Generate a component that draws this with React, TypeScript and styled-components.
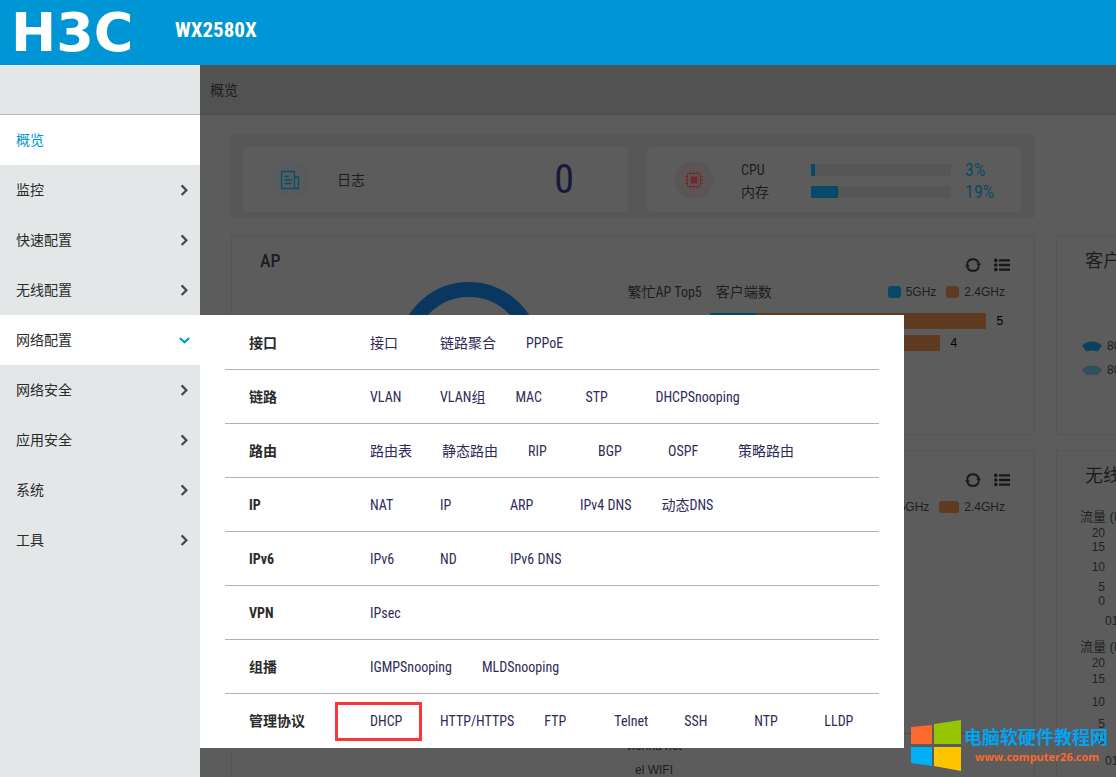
import React from 'react';
import styled, { createGlobalStyle } from 'styled-components';

const narrow = `"Roboto Condensed", "Liberation Sans Narrow", "Noto Sans CJK SC", sans-serif`;
const arial = `"Liberation Sans", "Noto Sans CJK SC", sans-serif`;

const GlobalStyle = createGlobalStyle`
  * { box-sizing: border-box; }
  body { margin: 0; font-family: ${narrow}; font-size: 14px; line-height: 20px; color: #1c1c22; background: #5c5c5c; }
  button { font: inherit; color: inherit; border: 0; background: none; padding: 0; cursor: pointer; }
  a { color: inherit; text-decoration: none; }
  h1, h2, h3, p, ul { margin: 0; padding: 0; font: inherit; list-style: none; }
  svg { display: block; }
`;

const Shell = styled.div`
  position: relative;
  display: flex;
  flex-direction: column;
  height: 100vh;
  overflow: hidden;
`;

const Header = styled.header`
  flex: none;
  display: flex;
  gap: 20px;
  height: 65px;
  padding: 0 12px 0 11px;
  background: #0096d6;
  color: #fff;
`;

const Logo = styled.a`
  width: 144px;
  font: bold 54px/66px "DejaVu Sans", sans-serif;
`;

const Model = styled.h1`
  font-size: 21px;
  font-weight: bold;
  line-height: 60px;
`;

const Body = styled.div`
  flex: 1;
  display: flex;
  min-height: 0;
  position: relative;
`;

const Sidebar = styled.nav`
  flex: none;
  width: 200px;
  background: #e3e7e8;
`;

const SidebarTop = styled.div`
  height: 50px;
  border-bottom: 1px solid #b4b8b9;
`;

const NavItem = styled.button<{ $open?: boolean; $current?: boolean }>`
  display: flex;
  align-items: center;
  justify-content: space-between;
  width: 100%;
  height: 50px;
  padding: 0 10px 0 16px;
  background: ${(p) => (p.$open || p.$current ? '#fff' : 'transparent')};
  color: ${(p) => (p.$current ? '#0096d6' : '#2b2b2b')};
`;

const Main = styled.main`
  flex: 1;
  min-width: 0;
  overflow: hidden;
`;

const Crumb = styled.div`
  height: 50px;
  padding: 0 10px;
  line-height: 50px;
  background: #525252;
  border-bottom: 1px solid #4e4e4e;
`;

const Board = styled.div`
  display: grid;
  grid-template-columns: minmax(804px, 2fr) minmax(380px, 1fr);
  column-gap: 21px;
  padding: 20px 0 0 31px;
`;

const Overview = styled.section`
  display: grid;
  grid-template-columns: 385fr 374fr;
  gap: 19px;
  grid-column: 1;
  height: 83px;
  margin-bottom: 17px;
  padding: 12px 14px 6px 12px;
  background: #575757;
`;

const Tile = styled.div`
  display: flex;
  align-items: center;
  padding: 0 28px;
  border-radius: 4px;
  background: #5c5c5c;
`;

const Round = styled.span<{ $tint: string }>`
  display: flex;
  align-items: center;
  justify-content: center;
  flex: none;
  width: 38px;
  height: 38px;
  margin-right: 28px;
  border-radius: 50%;
  background: ${(p) => p.$tint};
`;

const Count = styled.strong`
  margin-left: auto;
  margin-right: 26px;
  font-size: 40px;
  font-weight: normal;
  line-height: 60px;
  color: #1a1836;
`;

const Meters = styled.div`
  flex: 1;
  padding-top: 2px;
`;

const Meter = styled.div`
  display: grid;
  grid-template-columns: 70px 1fr 28px;
  align-items: center;
  height: 22px;
`;

const Track = styled.span`
  height: 12px;
  margin-right: 14px;
  background: #565656;
`;

const Fill = styled.span`
  display: block;
  height: 100%;
  background: #064a66;
`;

const Percent = styled.span`
  font-size: 18px;
  color: #0a4a66;
`;

const Card = styled.section<{ $tall?: boolean; $first?: boolean }>`
  ${(p) => p.$first && 'grid-column: 1;'}
  height: ${(p) => (p.$tall ? '420px' : '200px')};
  margin-bottom: 15px;
  padding: 0 24px 0 28px;
  border: 1px solid #565656;
  overflow: hidden;
`;

const CardHead = styled.div`
  display: flex;
  justify-content: space-between;
  height: 46px;
  padding-top: 13px;
`;

const CardTitle = styled.h2<{ $strong?: boolean }>`
  font-size: 18px;
  font-weight: ${(p) => (p.$strong ? 500 : 400)};
  line-height: 24px;
`;

const Tools = styled.div`
  display: flex;
  align-items: center;
  gap: 13px;
  height: 32px;
`;

const ApBody = styled.div`
  display: grid;
  grid-template-columns: 368fr 383fr;
`;

const DonutBox = styled.div`
  display: flex;
  justify-content: center;
  padding-left: 50px;
`;

const Legend = styled.div`
  display: flex;
  align-items: center;
  gap: 10px;
  margin-left: auto;
  padding-right: 5px;
  font: 12px/18px ${arial};
`;

const Key = styled.span<{ $tone: string; $wide?: boolean }>`
  display: flex;
  align-items: center;
  gap: 5px;
  &::before {
    content: '';
    width: ${(p) => (p.$wide ? '20px' : '13px')};
    height: 12px;
    border-radius: 3px;
    background: ${(p) => p.$tone};
  }
`;

const ChartHead = styled.div`
  display: flex;
  gap: 14px;
  height: 20px;
`;

const Bars = styled.div`
  display: grid;
  gap: 6px;
  padding: 11px 0 0 82px;
`;

const BarRow = styled.div`
  display: flex;
  align-items: center;
  height: 16px;
  font: 12px/16px ${arial};
  color: #000;
`;

const Segment = styled.span<{ $tone: string }>`
  height: 16px;
  background: ${(p) => p.$tone};
`;

const BarValue = styled.span`
  margin-left: 11px;
`;

const RadioList = styled.ul`
  padding-top: 52px;
  font: 12px/24px ${arial};
  li { display: flex; align-items: center; gap: 5px; margin-left: -3px; }
`;

const SsidAxis = styled.div`
  display: flex;
  justify-content: center;
  margin-top: 216px;
  padding-left: 38px;
  border-top: 1px solid #4c4c4c;
  font: 12px/24px ${arial};
  text-align: center;
  white-space: nowrap;
`;

const TrafficChart = styled.svg`
  margin: 19px 0 0 -5px;
  overflow: visible;
  font: 12px ${arial};
  fill: #222226;
`;

/* Fly-out menu over the dashboard */
const Flyout = styled.div`
  position: absolute;
  left: 200px;
  top: 250px;
  width: 704px;
  padding: 1px 25px 0;
  background: #fff;
`;

const FlyRow = styled.div`
  display: flex;
  align-items: center;
  height: 54px;
  padding-left: 24px;
  border-bottom: 1px solid #b2b2b2;
  &:last-child { border-bottom: 0; }
`;

const FlyTitle = styled.h3`
  width: 121px;
  font-weight: bold;
  color: #2b2b2b;
`;

const FlyLinks = styled.div`
  display: flex;
  gap: 30px;
  color: #2f2a5a;
  white-space: nowrap;
`;

const FlyLink = styled.a<{ $marked?: boolean }>`
  position: relative;
  min-width: 40px;
  ${(p) =>
    p.$marked &&
    `&::after {
      content: '';
      position: absolute;
      inset: -9px -12px -10px -35px;
      border: 3px solid #fb3638;
    }`}
`;

const Watermark = styled.aside`
  position: absolute;
  right: 8px;
  bottom: 5px;
  display: flex;
  gap: 3px;
  white-space: nowrap;
`;

const MarkName = styled.p`
  padding-top: 4px;
  font: bold 18px/24px "Noto Sans CJK SC", sans-serif;
  color: #00a4f4;
`;

const MarkUrl = styled.a`
  display: block;
  padding: 1px 0 0 11px;
  font: bold 11px/16px "Open Sans", sans-serif;
  color: #fb6a2c;
`;

const menu = ['监控', '快速配置', '无线配置', '网络配置', '网络安全', '应用安全', '系统', '工具'];

const groups: [string, string[]][] = [
  ['接口', ['接口', '链路聚合', 'PPPoE']],
  ['链路', ['VLAN', 'VLAN组', 'MAC', 'STP', 'DHCPSnooping']],
  ['路由', ['路由表', '静态路由', 'RIP', 'BGP', 'OSPF', '策略路由']],
  ['IP', ['NAT', 'IP', 'ARP', 'IPv4 DNS', '动态DNS']],
  ['IPv6', ['IPv6', 'ND', 'IPv6 DNS']],
  ['VPN', ['IPsec']],
  ['组播', ['IGMPSnooping', 'MLDSnooping']],
  ['管理协议', ['DHCP', 'HTTP/HTTPS', 'FTP', 'Telnet', 'SSH', 'NTP', 'LLDP']],
];

const blue = '#064a66';
const orange = '#5f3b22';

const Chevron = ({ down }: { down?: boolean }) => (
  <svg width="11" height="12" viewBox="0 0 11 12" fill="none" strokeWidth="2.2" stroke={down ? '#0096d6' : '#44464f'}>
    <path d={down ? 'M0.8 4l4.7 4.2L10.2 4' : 'M2.6 1.4l4.8 4.8L2.6 11'} />
  </svg>
);

const RefreshIcon = () => (
  <svg width="16" height="16" viewBox="0 0 16 16">
    <path d="M2.2 6.6A6 6 0 0 1 13.8 6.6M13.8 9.4A6 6 0 0 1 2.2 9.4" fill="none" stroke="#17171c" strokeWidth="2" />
    <path d="M11.2 6.6h4.8l-2.3 3.4zM0 9.4h4.8L2.3 6z" fill="#17171c" />
  </svg>
);

const ListIcon = () => (
  <svg width="16" height="16" viewBox="0 0 16 16" fill="#17171c">
    <circle cx="1.8" cy="3.4" r="1.8" />
    <circle cx="1.8" cy="8" r="1.8" />
    <circle cx="1.8" cy="12.6" r="1.8" />
    <path d="M5 2.2h11v2.4H5zM5 6.8h11v2.4H5zM5 11.4h11v2.4H5z" />
  </svg>
);

const CardTools = () => (
  <Tools>
    <button type="button" aria-label="刷新"><RefreshIcon /></button>
    <button type="button" aria-label="列表"><ListIcon /></button>
  </Tools>
);

const LogIcon = () => (
  <svg width="20" height="20" viewBox="0 0 20 20" fill="none" stroke="#07506a" strokeWidth="1.3">
    <path d="M1.5 1.5h13v17h-13zM14.5 7h4v11.5h-4M4.5 6.5h4M4.5 10h7M4.5 13.5h7" />
  </svg>
);

const ChipIcon = () => (
  <svg width="20" height="20" viewBox="0 0 20 20" fill="none" stroke="#702a2e" strokeWidth="1">
    <rect x="3.5" y="3.5" width="13" height="13" rx="1" />
    <rect x="7" y="7" width="6" height="6" fill="#702a2e" />
    <path d="M6.5 1v2.5M10 1v2.5M13.5 1v2.5M6.5 16.5V19M10 16.5V19M13.5 16.5V19M1 6.5h2.5M1 10h2.5M1 13.5h2.5M16.5 6.5H19M16.5 10H19M16.5 13.5H19" />
  </svg>
);

const FanIcon = ({ tone }: { tone: string }) => (
  <svg width="20" height="11" viewBox="0 0 20 11" fill={tone}>
    <path d="M0 5Q3 0.5 10 0.5T20 5L15.5 10.4Q13 9.4 10 9.4T4.5 10.4Z" />
  </svg>
);

const Traffic = ({ top, ticks, end }: { top: number; ticks: [number, string][]; end: number }) => (
  <g>
    <text x="0" y={top} fontSize="13">流量 (Mbps)</text>
    {ticks.map(([y, label]) => (
      <text key={label} x="25" y={y} textAnchor="end">{label}</text>
    ))}
    <text x="25" y={end}>01:00</text>
  </g>
);

export default function App() {
  return (
    <Shell>
      <GlobalStyle />
      <Header>
        <Logo href="#">H3C</Logo>
        <Model>WX2580X</Model>
      </Header>
      <Body>
        <Sidebar>
          <SidebarTop />
          <NavItem type="button" $current>概览</NavItem>
          {menu.map((name) => (
            <NavItem key={name} type="button" $open={name === '网络配置'}>
              {name}
              <Chevron down={name === '网络配置'} />
            </NavItem>
          ))}
        </Sidebar>
        <Main>
          <Crumb>概览</Crumb>
          <Board>
            <Overview>
              <Tile>
                <Round $tint="#575b5e"><LogIcon /></Round>
                <span>日志</span>
                <Count>0</Count>
              </Tile>
              <Tile>
                <Round $tint="#5c5555"><ChipIcon /></Round>
                <Meters>
                  {[['CPU', 3], ['内存', 19]].map(([name, value]) => (
                    <Meter key={name}>
                      <span>{name}</span>
                      <Track><Fill style={{ width: `${value}%` }} /></Track>
                      <Percent>{value}%</Percent>
                    </Meter>
                  ))}
                </Meters>
              </Tile>
            </Overview>
            <Card $first>
              <CardHead>
                <CardTitle $strong>AP</CardTitle>
                <CardTools />
              </CardHead>
              <ApBody>
                <DonutBox>
                  <svg width="142" height="142" viewBox="0 0 142 142">
                    <circle cx="71" cy="71" r="63.5" fill="none" stroke="#0a3760" strokeWidth="15" />
                  </svg>
                </DonutBox>
                <div>
                  <ChartHead>
                    <span>繁忙AP Top5</span>
                    <span>客户端数</span>
                    <Legend>
                      <Key $tone={blue}>5GHz</Key>
                      <Key $tone={orange}>2.4GHz</Key>
                    </Legend>
                  </ChartHead>
                  <Bars>
                    {[[1, 5], [1, 4]].map(([five, two]) => (
                      <BarRow key={two}>
                        <Segment $tone={blue} style={{ width: five * 46 }} />
                        <Segment $tone={orange} style={{ width: two * 46 }} />
                        <BarValue>{two}</BarValue>
                      </BarRow>
                    ))}
                  </Bars>
                </div>
              </ApBody>
            </Card>
            <Card>
              <CardHead><CardTitle>客户端</CardTitle></CardHead>
              <RadioList>
                <li><FanIcon tone="#0a425c" />802.11ac</li>
                <li><FanIcon tone="#31505c" />802.11n</li>
              </RadioList>
            </Card>
            <Card $tall>
              <CardHead>
                <span />
                <CardTools />
              </CardHead>
              <ChartHead>
                <Legend>
                  <Key $wide $tone={blue}>5GHz</Key>
                  <Key $wide $tone={orange}>2.4GHz</Key>
                </Legend>
              </ChartHead>
              <SsidAxis><div>vienna hot<br />el WIFI</div></SsidAxis>
            </Card>
            <Card $tall>
              <CardHead><CardTitle>无线流量</CardTitle></CardHead>
              <TrafficChart width="300" height="280">
                <Traffic top={5} ticks={[[21, '20'], [35, '15'], [55, '10'], [75, '5'], [89, '0']]} end={109} />
                <Traffic top={135} ticks={[[151, '20'], [167, '15'], [190, '10'], [212, '5'], [228, '0']]} end={249} />
              </TrafficChart>
            </Card>
          </Board>
        </Main>
        <Flyout>
          {groups.map(([title, links]) => (
            <FlyRow key={title}>
              <FlyTitle>{title}</FlyTitle>
              <FlyLinks>
                {links.map((name) => (
                  <FlyLink key={name} href="#" $marked={name === 'DHCP'}>{name}</FlyLink>
                ))}
              </FlyLinks>
            </FlyRow>
          ))}
        </Flyout>
      </Body>
      <Watermark>
        <svg width="50" height="52" viewBox="0 0 50 52">
          <polygon points="0,7 21,5 21,24 0,24" fill="#fb6a2c" />
          <polygon points="23,4 50,0 50,24 23,24" fill="#97c400" />
          <polygon points="0,27 21,27 21,46 0,43" fill="#00b0f4" />
          <polygon points="23,27 50,27 50,51 23,46" fill="#ffc400" />
        </svg>
        <div>
          <MarkName>电脑软硬件教程网</MarkName>
          <MarkUrl href="#">www.computer26.com</MarkUrl>
        </div>
      </Watermark>
    </Shell>
  );
}
